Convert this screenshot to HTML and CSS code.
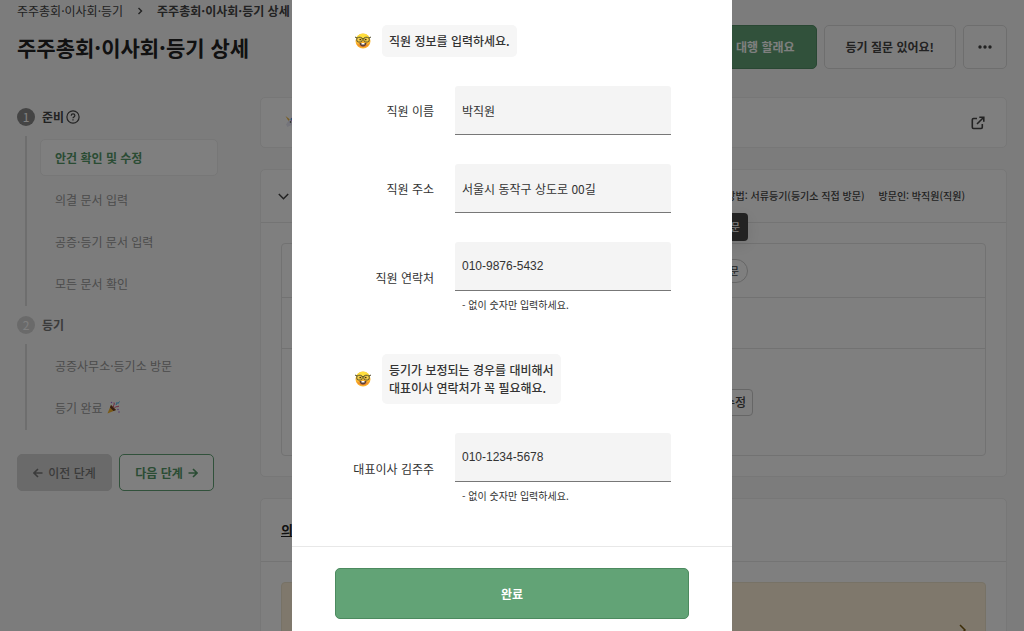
FILE: index.html
```html
<!DOCTYPE html>
<html lang="ko">
<head>
    <meta charset="UTF-8">
    <meta name="viewport" content="width=device-width, initial-scale=1.0">
    <title>주주총회·이사회·등기 상세</title>
    <link rel="stylesheet" href="styles.css">
</head>
<body>
    <div class="page">
        <nav class="breadcrumb">
            <a href="#">주주총회·이사회·등기</a>
            <svg width="6" height="8" viewBox="0 0 6 8"><path d="M1.5 1l3 3-3 3" fill="none" stroke="currentColor" stroke-width="1.4"/></svg>
            <strong>주주총회·이사회·등기 상세</strong>
        </nav>

        <header class="page-header">
            <h1>주주총회·이사회·등기 상세</h1>
            <div class="actions">
                <button type="button" class="btn btn-primary">등기 대행 할래요</button>
                <button type="button" class="btn">등기 질문 있어요!</button>
                <button type="button" class="btn btn-more" aria-label="더보기">
                    <svg width="14" height="4" viewBox="0 0 14 4" fill="currentColor"><circle cx="2" cy="2" r="1.7"/><circle cx="7" cy="2" r="1.7"/><circle cx="12" cy="2" r="1.7"/></svg>
                </button>
            </div>
        </header>

        <div class="content">
            <aside class="sidebar">
                <div class="step">
                    <span class="step-number">1</span>준비
                    <svg class="help" width="14" height="14" viewBox="0 0 14 14" fill="none" stroke="currentColor" stroke-width="1.2"><circle cx="7" cy="7" r="6.1"/><path d="M5.2 5.7c0-2.5 3.7-2.4 3.7-.1 0 1.3-1.9 1.3-1.9 2.6M7 9.3v1.3"/></svg>
                </div>
                <ul class="step-list">
                    <li><a href="#" class="active">안건 확인 및 수정</a></li>
                    <li><a href="#">의결 문서 입력</a></li>
                    <li><a href="#">공증·등기 문서 입력</a></li>
                    <li><a href="#">모든 문서 확인</a></li>
                </ul>
                <div class="step step-pending">
                    <span class="step-number">2</span>등기
                </div>
                <ul class="step-list">
                    <li><a href="#">공증사무소·등기소 방문</a></li>
                    <li><a href="#">등기 완료
                        <svg width="13" height="13" viewBox="0 0 26 26"><path d="M1 25L8 8l10 10z" fill="#f5b52e"/><path d="M8 8l10 10-5 2-7-7z" fill="#6a3a2a"/><path d="M13 12c-1-4 3-4 1-9M15 14c3-5 6-1 9-4" fill="none" stroke="#e0507a" stroke-width="2"/><path d="M19 2l3 3 3-4M18 8l2-4" fill="none" stroke="#4ab8f0" stroke-width="2"/><g fill="#a86be0"><circle cx="22" cy="17" r="1.5"/><circle cx="9" cy="3" r="1.5"/><circle cx="24" cy="22" r="1.5"/></g></svg>
                    </a></li>
                </ul>
                <div class="step-nav">
                    <button type="button" class="btn-step btn-prev">
                        <svg width="10" height="10" viewBox="0 0 10 10"><path d="M9.5 5H1M5 1L1 5l4 4" fill="none" stroke="currentColor" stroke-width="1.6"/></svg>이전 단계
                    </button>
                    <button type="button" class="btn-step btn-next">다음 단계
                        <svg width="10" height="10" viewBox="0 0 10 10"><path d="M.5 5H9M5 1l4 4-4 4" fill="none" stroke="currentColor" stroke-width="1.6"/></svg>
                    </button>
                </div>
            </aside>

            <main class="main">
                <section class="card card-link">
                    <svg width="16" height="16" viewBox="0 0 32 32"><path d="M1 2l9 7-3 3z" fill="#f0b840"/><path d="M8 10l6-5 9 4 5 18-14 1-1-8-8 4-3-5z" fill="#e8e8f5"/><path d="M12 6c8-4 17 3 17 19l-6-3c0-7-4-10-11-11z" fill="#b55ad8"/><path d="M10 8l6-2-1 5z" fill="#4ac0e8"/><circle cx="11" cy="14" r="1.5" fill="#333"/></svg>
                    <svg width="14" height="14" viewBox="0 0 14 14" fill="none" stroke="currentColor" stroke-width="1.6"><path d="M6 2.5H2.5Q1.300 2.500 1.300 3.700v7.600q0 1.200 1.200 1.200h7.600q1.200 0 1.200-1.200V8M8.300 1.200h4.500v4.500M12.500 1.500L6 8"/></svg>
                </section>

                <section class="card">
                    <div class="card-header">
                        <svg width="11" height="7" viewBox="0 0 11 7"><path d="M.8 1l4.7 4.7L10.2 1" fill="none" stroke="currentColor" stroke-width="1.5"/></svg>
                        <div class="summary">
                            <span>등기 방법: 서류등기(등기소 직접 방문)</span>
                            <span>방문인: 박직원(직원)</span>
                        </div>
                    </div>
                    <div class="card-body">
                        <div class="rows">
                            <div class="row">
                                <div class="row-value">
                                    <div class="pill-wrap">
                                        <span class="tooltip">등기소 방문</span>
                                        <span class="pill">직접 방문</span>
                                    </div>
                                </div>
                            </div>
                            <div class="row"></div>
                            <div class="row row-tall">
                                <div class="row-value">
                                    <button type="button" class="btn-small">수정</button>
                                </div>
                            </div>
                        </div>
                    </div>
                </section>

                <section class="card">
                    <div class="card-header card-title"><h2>의결 문서</h2></div>
                    <div class="card-body">
                        <div class="notice">
                            <svg width="8" height="12" viewBox="0 0 8 12"><path d="M1 1l5 5-5 5" fill="none" stroke="currentColor" stroke-width="1.5"/></svg>
                        </div>
                    </div>
                </section>
            </main>
        </div>
    </div>

    <svg class="symbols" width="0" height="0">
        <symbol id="nerd" viewBox="0 0 32 32">
            <circle cx="16" cy="16" r="15" fill="#fbb62d"/>
            <path d="M2 11a15 15 0 0 1 28 0c-5 6-23 6-28 0z" fill="#ffdf3d"/>
            <path d="M3 21a15 15 0 0 0 26 0c-6 4-20 4-26 0z" fill="#f0852d"/>
            <path d="M9 20h14c0 9-14 9-14 0z" fill="#5b4036"/>
            <path d="M13 20h6v3h-6z" fill="#fff"/>
            <g fill="#f3cf4a" stroke="#4d4a2c" stroke-width="1.8"><rect x="3.500" y="8.500" width="11" height="9.500" rx="4"/><rect x="17.500" y="8.500" width="11" height="9.500" rx="4"/></g>
            <path d="M0 8l4 2M32 8l-4 2M14.500 11h3" fill="none" stroke="#4d4a2c" stroke-width="2"/>
            <circle cx="10.500" cy="13" r="1.700" fill="#4a2a14"/><circle cx="21.500" cy="13" r="1.700" fill="#4a2a14"/>
        </symbol>
    </svg>

    <div class="overlay">
        <form class="modal" role="dialog" aria-label="직원 정보">
            <div class="modal-body">
                <div class="message">
                    <svg width="16" height="16"><use href="#nerd"/></svg>
                    <p>직원 정보를 입력하세요.</p>
                </div>
                <div class="field">
                    <label for="name">직원 이름</label>
                    <div><input type="text" id="name" value="박직원"></div>
                </div>
                <div class="field">
                    <label for="address">직원 주소</label>
                    <div><input type="text" id="address" value="서울시 동작구 상도로 00길"></div>
                </div>
                <div class="field">
                    <label for="phone">직원 연락처</label>
                    <div>
                        <input type="tel" id="phone" value="010-9876-5432">
                        <small>- 없이 숫자만 입력하세요.</small>
                    </div>
                </div>
                <div class="message message-next">
                    <svg width="16" height="16"><use href="#nerd"/></svg>
                    <p>등기가 보정되는 경우를 대비해서<br>대표이사 연락처가 꼭 필요해요.</p>
                </div>
                <div class="field">
                    <label for="ceo-phone">대표이사 김주주</label>
                    <div>
                        <input type="tel" id="ceo-phone" value="010-1234-5678">
                        <small>- 없이 숫자만 입력하세요.</small>
                    </div>
                </div>
            </div>
            <div class="modal-footer">
                <button type="button" class="btn-submit">완료</button>
            </div>
        </form>
    </div>
</body>
</html>
```

FILE: styles.css
```css
* {
    box-sizing: border-box;
}

body {
    margin: 0;
    height: 100vh;
    overflow: hidden;
    background-color: #f8f8f8;
    color: #444;
    font-family: "Noto Sans CJK KR", sans-serif;
    font-size: 12px;
    font-weight: 500;
    line-height: 18px;
}

h1, h2, p, ul {
    margin: 0;
    padding: 0;
}

ul {
    list-style: none;
}

a {
    color: inherit;
    text-decoration: none;
}

svg {
    flex-shrink: 0;
}

button, input {
    font: inherit;
    color: inherit;
}

button {
    cursor: pointer;
}

.symbols {
    position: absolute;
}

.page {
    height: 100%;
    overflow: hidden;
    padding: 2px 17px 0;
}

.breadcrumb {
    display: flex;
    align-items: center;
    gap: 14px;
    font-weight: 400;
}

.breadcrumb strong {
    font-weight: 700;
}

.page-header {
    display: flex;
    justify-content: space-between;
    align-items: center;
    margin-top: 5px;
}

h1 {
    font-size: 21px;
    line-height: 30px;
    color: #222;
}

.actions {
    display: flex;
    gap: 7px;
}

.btn {
    height: 44px;
    padding: 0 21px;
    background-color: #fbfbfb;
    border: 1px solid #ddd;
    border-radius: 5px;
    font-weight: 700;
}

.btn-primary {
    background-color: #62a376;
    border-color: #528f66;
    color: #fff;
}

.btn-more {
    display: flex;
    align-items: center;
    padding: 0 14px;
}

.content {
    display: flex;
    gap: 42px;
    margin-top: 28px;
}

.sidebar {
    width: 201px;
    flex-shrink: 0;
    padding-top: 11px;
}

.step {
    display: flex;
    align-items: center;
    gap: 7px;
    font-weight: 700;
}

.step .help {
    margin-left: -5px;
}

.step-number {
    width: 18px;
    height: 18px;
    border-radius: 50%;
    background-color: #888;
    color: #fff;
    text-align: center;
    font-weight: 400;
}

.step-pending {
    color: #777;
}

.step-pending .step-number {
    background-color: #d4d4d4;
}

.step-list {
    display: grid;
    gap: 5px;
    margin: 10px 0 10px 8px;
    padding: 3px 0 4px 13px;
    border-left: 2px solid #ddd;
    color: #999;
    font-weight: 400;
}

.step-list a {
    display: flex;
    align-items: center;
    gap: 4px;
    height: 37px;
    padding: 0 14px;
    border: 1px solid transparent;
    border-radius: 5px;
}

.step-list .active {
    background-color: #fff;
    border-color: #eee;
    color: #559868;
    font-weight: 700;
}

.step-nav {
    display: flex;
    gap: 7px;
    margin-top: 24px;
}

.btn-step {
    display: flex;
    align-items: center;
    justify-content: center;
    gap: 5px;
    width: 95px;
    height: 37px;
    border: 1px solid #d4d4d4;
    border-radius: 5px;
    white-space: nowrap;
}

.btn-prev {
    background-color: #d4d4d4;
    color: #777;
}

.btn-next {
    background-color: #fff;
    border-color: #62a376;
    color: #559868;
    font-weight: 700;
}

.main {
    flex: 1;
    display: grid;
    gap: 21px;
}

.card {
    background-color: #fff;
    border: 1px solid #eee;
    border-radius: 5px;
}

.card-link {
    display: flex;
    align-items: center;
    justify-content: space-between;
    height: 51px;
    padding: 0 21px 0 24px;
}

.card-header {
    display: flex;
    align-items: center;
    justify-content: space-between;
    height: 53px;
    padding: 0 41px 0 17px;
    border-bottom: 1px solid #e8e8e8;
}

.card-title {
    height: 63px;
    padding: 0 20px;
}

h2 {
    font-size: 13px;
    color: #222;
    text-decoration: underline;
}

.summary {
    display: flex;
    gap: 14px;
    font-size: 10px;
}

.card-body {
    padding: 20px;
}

.rows {
    border: 1px solid #e4e4e4;
    border-radius: 4px;
}

.row {
    display: flex;
    align-items: center;
    height: 51px;
}

.row:first-child {
    height: 53px;
}

.row + .row {
    border-top: 1px solid #e4e4e4;
}

.row-tall {
    height: 107px;
}

.row-value {
    display: flex;
    justify-content: flex-end;
    width: 67%;
}

.pill-wrap {
    position: relative;
    margin-right: 5px;
}

.pill {
    display: block;
    padding: 2px 8px;
    border: 1px solid #ccc;
    border-radius: 12px;
    font-size: 10px;
}

.tooltip {
    position: absolute;
    right: 0;
    bottom: 42px;
    padding: 5px 8px;
    border-radius: 4px;
    background-color: #444;
    box-shadow: 0 4px 16px rgba(0, 0, 0, 0.1);
    color: #fff;
    font-size: 10px;
    white-space: nowrap;
}

.btn-small {
    height: 27px;
    padding: 0 6px;
    background-color: #fff;
    border: 1px solid #ccc;
    border-radius: 4px;
}

.notice {
    display: flex;
    justify-content: flex-end;
    height: 100px;
    padding: 41px 18px 0;
    background-color: #fff0d8;
    border: 1px solid #eee4cc;
    border-radius: 4px;
    color: #7a5a10;
}

/* Modal */
.overlay {
    position: fixed;
    inset: 0;
    display: flex;
    justify-content: center;
    background-color: rgba(0, 0, 0, 0.5);
}

.modal {
    width: 100%;
    max-width: 440px;
    background-color: #fff;
    color: #333;
    font-weight: 400;
}

.modal-body {
    display: grid;
    gap: 29px;
    padding: 25px 61px 41px 43px;
}

.message {
    display: flex;
    align-items: center;
    gap: 11px;
    padding-left: 20px;
}

.message-next {
    margin-top: 11px;
}

.message p {
    padding: 7px;
    border-radius: 5px;
    background-color: #f6f6f6;
    font-weight: 500;
}

.field {
    display: grid;
    grid-template-columns: 99px 1fr;
    column-gap: 21px;
    align-items: center;
}

.field label {
    text-align: right;
}

.field input {
    display: block;
    width: 100%;
    height: 49px;
    padding: 0 7px;
    border: 0;
    border-bottom: 1px solid #777;
    border-radius: 3px 3px 0 0;
    background-color: #f4f4f4;
}

.field input[type="tel"] {
    font-family: "Liberation Sans", sans-serif;
}

.field small {
    display: block;
    padding: 5px 7px 0;
    font-size: 10px;
}

.modal-footer {
    padding: 21px 43px 12px;
    border-top: 1px solid #e8e8e8;
}

.btn-submit {
    width: 100%;
    height: 51px;
    background-color: #62a376;
    border: 1px solid #4c8a5f;
    border-radius: 5px;
    color: #fff;
    font-weight: 700;
}
```
